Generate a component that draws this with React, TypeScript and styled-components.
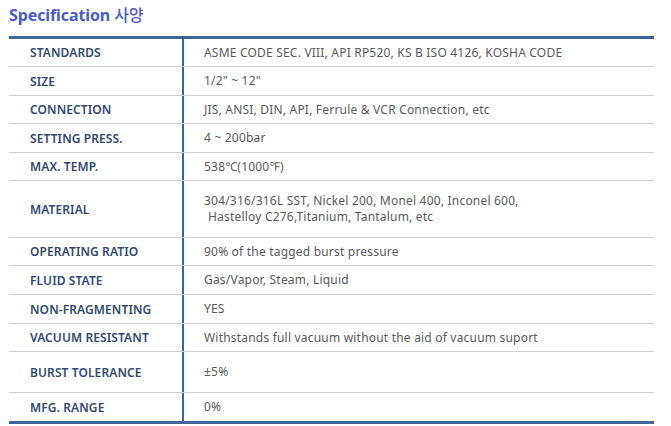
import React from 'react'
import styled, { createGlobalStyle } from 'styled-components'

const GlobalStyle = createGlobalStyle`
  html, body {
    margin: 0;
    padding: 0;
    background: #fff;
  }
  body {
    font-family: "Noto Sans", "Noto Sans CJK KR", sans-serif;
  }
`

const Page = styled.div`
  width: 671px;
  height: 426px;
  padding: 3px 17px 0 9px;
  box-sizing: border-box;
  overflow: hidden;
`

const Title = styled.h2`
  margin: 0 0 10px;
  font-size: 16px;
  line-height: 22px;
  font-weight: 700;
  color: #4a5bc6;
  letter-spacing: -0.1px;

  span {
    font-family: "Noto Sans CJK KR", sans-serif;
    font-weight: 500;
    margin-left: 4px;
  }
`

const Table = styled.div`
  width: 645px;
  border-top: 3px solid #3e6596;
  border-bottom: 3px solid #3e6596;
`

const Row = styled.div<{ h: number; last?: boolean }>`
  display: grid;
  grid-template-columns: 175px 1fr;
  height: ${({ h }) => h}px;
  border-bottom: ${({ last }) => (last ? 'none' : '1px solid #cfcfd2')};
  box-sizing: border-box;
`

const Label = styled.div`
  display: flex;
  align-items: center;
  padding-left: 21px;
  border-right: 2px solid #3e6596;
  font-size: 12px;
  font-weight: 600;
  color: #34496e;
  letter-spacing: 0.1px;
`

const Value = styled.div`
  display: flex;
  flex-direction: column;
  justify-content: center;
  padding-left: 20px;
  font-size: 12px;
  line-height: 16px;
  color: #5a5a5a;
  letter-spacing: 0.2px;
`

const Indent = styled.span`
  padding-left: 4px;
`

const specs: { label: string; value: React.ReactNode; h: number }[] = [
  { label: 'STANDARDS', value: 'ASME CODE SEC. VIII, API RP520, KS B ISO 4126, KOSHA CODE', h: 28 },
  { label: 'SIZE', value: '1/2" ~ 12"', h: 29 },
  { label: 'CONNECTION', value: 'JIS, ANSI, DIN, API, Ferrule & VCR Connection, etc', h: 28 },
  { label: 'SETTING PRESS.', value: '4 ~ 200bar', h: 29 },
  { label: 'MAX. TEMP.', value: '538℃(1000℉)', h: 28 },
  {
    label: 'MATERIAL',
    value: (
      <>
        <span>304/316/316L SST, Nickel 200, Monel 400, Inconel 600,</span>
        <Indent>Hastelloy C276,Titanium, Tantalum, etc</Indent>
      </>
    ),
    h: 57,
  },
  { label: 'OPERATING RATIO', value: '90% of the tagged burst pressure', h: 28 },
  { label: 'FLUID STATE', value: 'Gas/Vapor, Steam, Liquid', h: 29 },
  { label: 'NON-FRAGMENTING', value: 'YES', h: 29 },
  { label: 'VACUUM RESISTANT', value: 'Withstands full vacuum without the aid of vacuum suport', h: 28 },
  { label: 'BURST TOLERANCE', value: '±5%', h: 41 },
  { label: 'MFG. RANGE', value: '0%', h: 28 },
]

export default function App() {
  return (
    <Page>
      <GlobalStyle />
      <Title>
        Specification<span>사양</span>
      </Title>
      <Table>
        {specs.map((s, i) => (
          <Row key={s.label} h={s.h} last={i === specs.length - 1}>
            <Label>{s.label}</Label>
            <Value>{s.value}</Value>
          </Row>
        ))}
      </Table>
    </Page>
  )
}
